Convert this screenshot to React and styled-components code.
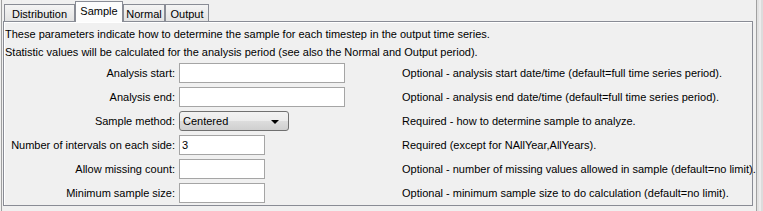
import React from 'react';
import styled, { createGlobalStyle } from 'styled-components';

const Global = createGlobalStyle`
  html, body { margin: 0; padding: 0; background: #f0f0f0; }
  body { font-family: "Liberation Sans", Arial, sans-serif; font-size: 11px; color: #000; }
  * { box-sizing: border-box; }
`;

const Frame = styled.div`
  display: flex;
  width: 763px;
  height: 211px;
  background: #f0f0f0;
  overflow: hidden;
`;

const LeftEdge = styled.div`
  margin-left: 1px;
  margin-right: 1px;
  width: 1px;
  background: #a0a0a0;
`;

const RightEdge = styled.div`
  margin-left: 3px;
  flex: 1;
  border-left: 1px solid #a0a0a0;
  background: linear-gradient(90deg, #e2e2e2 0 2px, #ececec 2px 4px, #dcdcdc 4px);
`;

const Main = styled.div`
  width: 750px;
  display: flex;
  flex-direction: column;
  padding-top: 2px;
`;

const TabStrip = styled.div`
  display: flex;
  align-items: flex-end;
  height: 19px;
  padding-left: 1px;
`;

const Tab = styled.div`
  position: relative;
  display: flex;
  justify-content: center;
  width: ${p => p.$w}px;
  border: 1px solid #898c95;
  border-bottom: none;
  ${p => p.$active ? `
    height: 21px;
    margin-bottom: -1px;
    z-index: 1;
    background: #fcfcfc;
    padding-top: 3px;
  ` : `
    height: 17px;
    background: linear-gradient(#f4f4f4, #e3e3e3);
    padding-top: 3px;
  `}
  line-height: 12px;
`;

const Panel = styled.div`
  height: 185px;
  border: 1px solid #898c95;
  box-shadow: inset 1px 1px 0 #fff;
  padding: 3px 1px 0 1px;
`;

const Intro = styled.div`
  line-height: 18px;
  white-space: nowrap;
`;

const Form = styled.div`
  margin-top: 2px;
  display: grid;
  grid-template-columns: 170px 219px 1fr;
  grid-auto-rows: 20px;
  column-gap: 4px;
  row-gap: 4px;
  align-items: center;
`;

const Label = styled.div`
  text-align: right;
  white-space: nowrap;
`;

const Field = styled.div`
  width: ${p => p.$w}px;
  height: 20px;
  border: 1px solid #a5a5a5;
  background: #fff;
  padding-left: 2px;
  line-height: 18px;
`;

const Combo = styled.div`
  position: relative;
  width: 110px;
  height: 20px;
  border: 1px solid #707070;
  border-radius: 3px;
  background: linear-gradient(#f2f2f2 0%, #ebebeb 50%, #dddddd 50%, #cfcfcf 100%);
  padding-left: 3px;
  line-height: 18px;
`;

const Arrow = styled.span`
  position: absolute;
  right: 9px;
  top: 8px;
  width: 0;
  height: 0;
  border-left: 4px solid transparent;
  border-right: 4px solid transparent;
  border-top: 4px solid #000;
`;

const Desc = styled.div`
  white-space: nowrap;
`;

const rows = [
  { label: 'Analysis start:', kind: 'field', w: 166, desc: 'Optional - analysis start date/time (default=full time series period).' },
  { label: 'Analysis end:', kind: 'field', w: 166, desc: 'Optional - analysis end date/time (default=full time series period).' },
  { label: 'Sample method:', kind: 'combo', value: 'Centered', desc: 'Required - how to determine sample to analyze.' },
  { label: 'Number of intervals on each side:', kind: 'field', w: 86, value: '3', desc: 'Required (except for NAllYear,AllYears).' },
  { label: 'Allow missing count:', kind: 'field', w: 86, desc: 'Optional - number of missing values allowed in sample (default=no limit).' },
  { label: 'Minimum sample size:', kind: 'field', w: 86, desc: 'Optional - minimum sample size to do calculation (default=no limit).' },
];

const tabs = [
  { name: 'Distribution', w: 71 },
  { name: 'Sample', w: 48, active: true },
  { name: 'Normal', w: 42 },
  { name: 'Output', w: 44 },
];

export default function App() {
  return (
    <>
      <Global />
      <Frame>
        <LeftEdge />
        <Main>
          <TabStrip>
            {tabs.map(t => (
              <Tab key={t.name} $w={t.w} $active={t.active}>{t.name}</Tab>
            ))}
          </TabStrip>
          <Panel>
            <Intro>These parameters indicate how to determine the sample for each timestep in the output time series.</Intro>
            <Intro>Statistic values will be calculated for the analysis period (see also the Normal and Output period).</Intro>
            <Form>
              {rows.map(r => (
                <React.Fragment key={r.label}>
                  <Label>{r.label}</Label>
                  <div>
                    {r.kind === 'combo' ? (
                      <Combo>{r.value}<Arrow /></Combo>
                    ) : (
                      <Field $w={r.w}>{r.value}</Field>
                    )}
                  </div>
                  <Desc>{r.desc}</Desc>
                </React.Fragment>
              ))}
            </Form>
          </Panel>
        </Main>
        <RightEdge />
      </Frame>
    </>
  );
}
